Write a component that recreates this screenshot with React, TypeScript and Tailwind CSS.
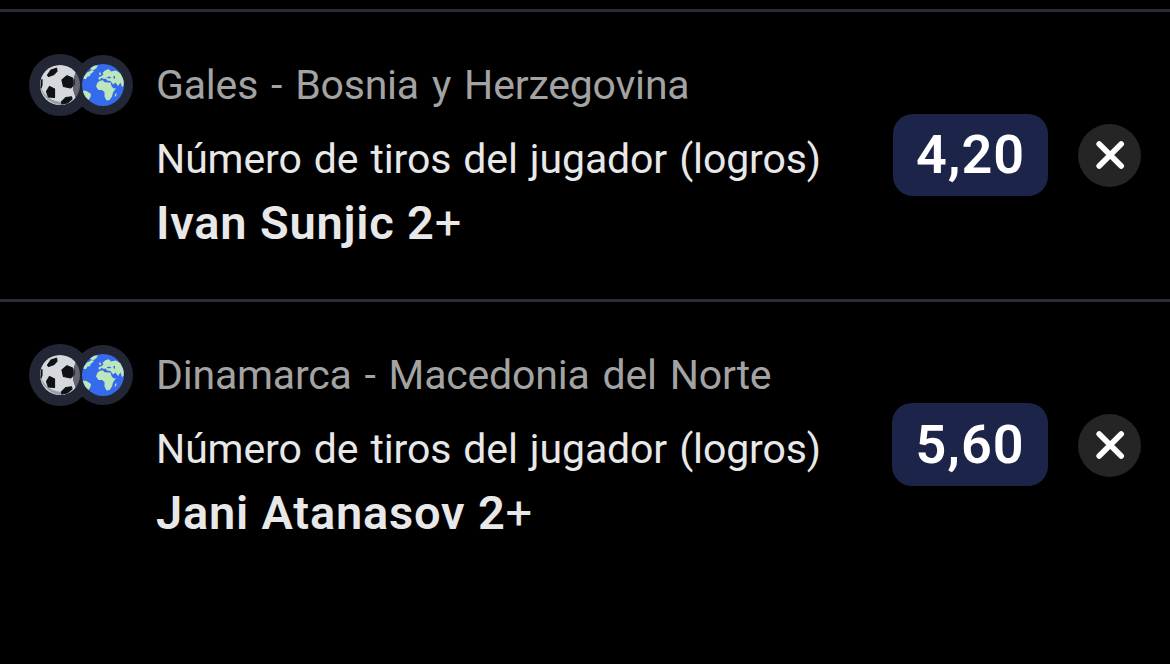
type Pick = {
  id: number;
  match: string;
  player: string;
  odds: string;
  oddsClass: string;
};

const picks: Pick[] = [
  {
    id: 1,
    match: "Gales - Bosnia y Herzegovina",
    player: "Ivan Sunjic 2",
    odds: "4,20",
    oddsClass: "h-[82px] w-[155px] mt-px",
  },
  {
    id: 2,
    match: "Dinamarca - Macedonia del Norte",
    player: "Jani Atanasov 2",
    odds: "5,60",
    oddsClass: "h-[83px] w-[156px] pt-px",
  },
];

function SportIcons({ id }: { id: number }) {
  const clip = `ring-${id}`;
  return (
    <svg viewBox="0 0 104 62" className="mt-[42px] h-[62px] w-[104px] shrink-0" aria-hidden="true">
      <defs>
        <clipPath id={clip}>
          <circle cx="74" cy="31" r="30" />
        </clipPath>
      </defs>
      <circle cx="31" cy="31" r="31" fill="#232735" />
      <circle cx="31" cy="31" r="20" fill="#d5d9dd" />
      <path d="M11.300 32C13 43 22 50 31 51C36 51 40 49 43 46C32 51 17 47 11.300 32Z" fill="#9b9fa6" />
      <g fill="#101114" stroke="#101114" strokeWidth="1.200" strokeLinejoin="round">
        <path d="M18.500 21L22 16L27.500 14.200L28 17L24.500 20.800L19.500 22.500Z" />
        <path d="M33 26L38 21.800L43.500 24L44.500 31L41.500 34L34.500 32.500Z" />
        <path d="M17.500 37.500L20.500 32.500L25.500 35L25.500 43.500L19.500 43Z" />
        <path d="M32.500 48L37 43.500L42.500 42.800L43 45L38 49L33 50Z" />
        <path d="M12.300 28L13 25.500L13 31L12 34Z" />
      </g>
      <circle cx="74" cy="31" r="30" fill="#232735" />
      <circle cx="31" cy="31" r="20" fill="#63666f" clipPath={`url(#${clip})`} />
      <path d="M44.300 30L45.500 24.500L44.600 31Z M44.500 26L46 25L46 31L44.200 32Z" fill="#2a2d36" />
      <circle cx="74" cy="31" r="21" fill="#366aed" />
      <g fill="#bde6bd">
        <path d="M55 22.500L58 18.500L60.500 17.500L62.500 16L65 17L63 19L61 20.500L61.500 22L58.500 22.500L57 25L54.500 25Z" />
        <path d="M61 14.500L65 11.700L69 11.200L67.500 14L64.500 16.300L62 15.500Z" />
        <path d="M53.700 36.500L57.500 37L62 40L61.500 43L59.500 46L56.500 43Q54.500 40 53.700 36.500Z" />
        <path d="M68.500 28.500L71 26.800L74 26.300L75 28L78 28.500L81.500 28.500L82.500 32L84.500 34.500L87 34L84 38.500L83 42.500L80.500 46L77.500 46.500L75.500 42.500L75.500 38L73 36L69.500 36L67 32.500Z" />
        <path d="M69.500 25.500L69.800 23L72 22.500L74.500 20.500L73.500 19L76 16.500L79 15.200L81 16L81.500 17.500L87 16.500L91.500 19.500L94 24.500L94.800 28L94.500 32L93 33L91.500 28.500L89 32L86.500 28.500L84 30.500L81.500 27L78 26.500L77 24.500L75 25L72.500 23.800L71 25.500Z" />
        <path d="M70.500 21L70 18.800L71.500 18.500L72.200 21Z" />
        <path d="M86 40.500L87.500 38.500L87.300 41.500L85.800 43Z" />
      </g>
      <path d="M77.500 23.500L80 22.500L82.500 23.500L80 24.500Z M84.500 22L86 22L86 25L84.500 24Z" fill="#366aed" />
    </svg>
  );
}

function CloseIcon() {
  return (
    <svg viewBox="0 0 63 63" className="size-[63px]" aria-hidden="true">
      <path d="M21.200 20L43.200 42M43.200 20L21.200 42" stroke="white" strokeWidth="5.600" strokeLinecap="round" />
    </svg>
  );
}

function PickRow({ pick }: { pick: Pick }) {
  return (
    <li className="flex h-[290px] items-start border-t-[3px] border-[#2d2b38] px-[29px]">
      <SportIcons id={pick.id} />
      <div className="ml-[23px] flex min-w-0 flex-1 flex-col pt-[43px] whitespace-nowrap">
        <p className="text-[41px] leading-[60px] tracking-[-0.2px] text-[#a3a3a3] [word-spacing:3px]">{pick.match}</p>
        <p className="mt-[14px] text-[41px] leading-[60px] tracking-[-0.12px] text-[#e8e8e8] [word-spacing:2px]">
          Número de tiros del jugador (logros)
        </p>
        <p className="mt-[4px] text-[47px] leading-[60px] font-semibold tracking-[0.8px] text-[#e8e8e8]">
          {pick.player}
          <span className="font-normal">+</span>
        </p>
      </div>
      <div className="flex shrink-0 items-start pt-[101px]">
        <button
          type="button"
          className={`flex items-center justify-center rounded-[20px] bg-[#1c2549] text-[54px] leading-none font-semibold tracking-[1px] text-white ${pick.oddsClass}`}
        >
          {pick.odds}
        </button>
        <button
          type="button"
          aria-label="Eliminar"
          className="mt-[11px] ml-[30px] flex size-[63px] items-center justify-center rounded-full bg-[#252525]"
        >
          <CloseIcon />
        </button>
      </div>
    </li>
  );
}

export default function App() {
  return (
    <main className="h-[664px] w-[1170px] overflow-hidden bg-black pt-[9px] font-['Roboto',sans-serif]">
      <ul>
        {picks.map((pick) => (
          <PickRow key={pick.id} pick={pick} />
        ))}
      </ul>
    </main>
  );
}
